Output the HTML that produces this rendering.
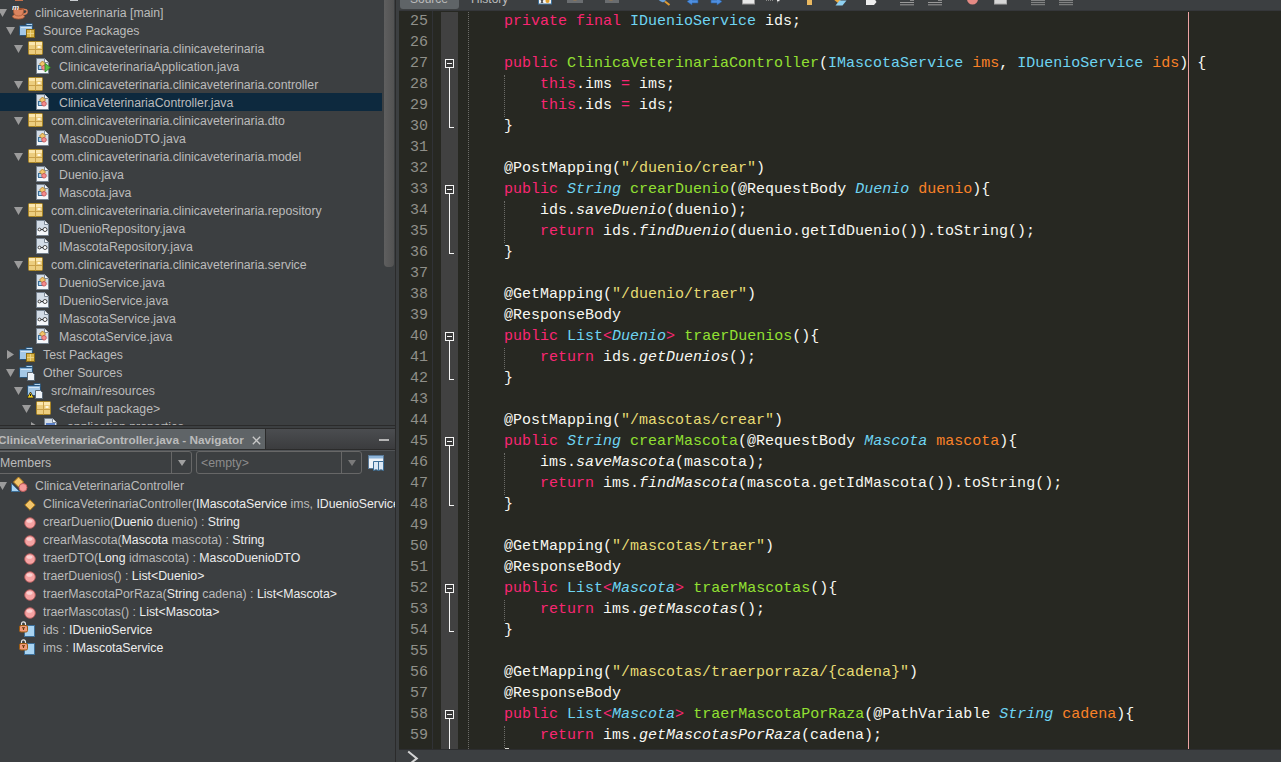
<!DOCTYPE html><html><head><meta charset="utf-8"><style>
*{box-sizing:border-box;margin:0;padding:0}
html,body{width:1281px;height:762px;overflow:hidden;background:#3c3f41}
body{position:relative;font-family:"Liberation Sans",sans-serif;}
.abs{position:absolute}
#proj{position:absolute;left:0;top:0;width:395px;height:425px;background:#3c3f41;overflow:hidden}
.row{position:absolute;left:0;width:382px;height:18px}
.row.sel{background:#0d293e}
.tx{position:absolute;top:1px;height:18px;line-height:18px;font-size:12.3px;color:#bbbbbb;white-space:pre}
.tx .w{color:#ededed}
#nav{position:absolute;left:0;top:427px;width:395px;height:335px;background:#3c3f41;overflow:hidden}
#ed{position:absolute;left:399px;top:11px;width:882px;height:738px;background:#272822;overflow:hidden}
.cl{position:absolute;left:69px;height:21px;line-height:21px;font-family:"Liberation Mono",monospace;font-size:15px;color:#f8f8f2;white-space:pre}
.ln{position:absolute;left:0;width:29px;text-align:right;height:21px;line-height:21px;font-family:"Liberation Mono",monospace;font-size:15px;color:#90908a}
.k{color:#f92672} .t{color:#6ed4f2} .ti{color:#6ed4f2;font-style:italic} .f{color:#92e032} .p{color:#fa8228} .s{color:#e6db74} .d{color:#f8f8f2} .i{font-style:italic}
#fold{position:absolute;left:42px;top:1px;width:17px;height:737px;background:#414141}
.fbox{position:absolute;left:46px;width:9px;height:9px;border:1px solid #f4f4f4;background:#383838}
.fbox i{position:absolute;left:1px;top:3px;width:5px;height:1px;background:#f4f4f4}
.fline{position:absolute;left:50px;width:1px;background:#f4f4f4}
.fend{position:absolute;left:50px;width:5px;height:1px;background:#f4f4f4}
.guide{position:absolute;width:1px;border-left:1px dotted #6c6c68}
#margin{position:absolute;left:789px;top:1px;width:1px;height:737px;background:#eea4a4}
#tb{position:absolute;left:396px;top:0;width:885px;height:11px;background:#3c3f41;overflow:hidden}
</style></head><body>
<div id="proj">
<svg width="8" height="1" viewBox="0 0 8 1" style="position:absolute;left:15px;top:0"><rect x="0" y="0" width="8" height="1" fill="#c8704a"/></svg>
<svg width="8" height="1" viewBox="0 0 8 1" style="position:absolute;left:70px;top:0"><rect x="0" y="0" width="8" height="1" fill="#c8ccd0"/></svg>
<div class="row" style="top:3px"><svg width="9" height="8" viewBox="0 0 9 8" style="position:absolute;left:-2px;top:6px"><path d="M0 0H9L4.5 8Z" fill="#9b9b9b"/></svg><div style="position:absolute;left:12px;top:0"><svg width="17" height="18" viewBox="0 0 17 18" style="position:absolute;left:0;top:0"><ellipse cx="6.5" cy="13.5" rx="6" ry="2.5" fill="#e08a62" stroke="#a85a38" stroke-width="0.8"/><path d="M11.5 6.5Q15.5 6 15 9Q14.5 11.5 11 11" fill="none" stroke="#d9805a" stroke-width="1.6"/><path d="M1.5 5.5H11.5V8Q11.5 13 6.5 13Q1.5 13 1.5 8Z" fill="#dc845e" stroke="#a85a38" stroke-width="0.8"/><ellipse cx="6.5" cy="6" rx="4.5" ry="1" fill="#9a4c2c"/><text x="0" y="7" font-size="8" font-family="Liberation Sans" font-style="italic" font-weight="bold" fill="#f0f4f8">m</text></svg></div><div class="tx" style="left:35px">clinicaveterinaria [main]</div></div>
<div class="row" style="top:21px"><svg width="9" height="8" viewBox="0 0 9 8" style="position:absolute;left:6px;top:6px"><path d="M0 0H9L4.5 8Z" fill="#9b9b9b"/></svg><div style="position:absolute;left:20px;top:0"><svg width="16" height="16" viewBox="0 0 16 16" style="position:absolute;left:-1px;top:2px"><path d="M7 0.5H12.5Q13.5 0.5 13.5 1.5V3H7Z" fill="#b4d4ee" stroke="#2a5478"/><rect x="0.5" y="2.5" width="13" height="10" rx="1" fill="#86b1d8" stroke="#2a5478"/><rect x="1" y="5" width="12" height="7" fill="#a4c8e6"/><path d="M1.5 4.5H12.5" stroke="#d4e6f4"/><rect x="7.5" y="6.5" width="8" height="8" fill="#d9b54a" stroke="#8a6a15"/><path d="M11.5 7V14M8 10.5H15" stroke="#f0d890" stroke-width="0.8"/></svg></div><div class="tx" style="left:43px">Source Packages</div></div>
<div class="row" style="top:39px"><svg width="9" height="8" viewBox="0 0 9 8" style="position:absolute;left:14px;top:6px"><path d="M0 0H9L4.5 8Z" fill="#9b9b9b"/></svg><div style="position:absolute;left:28px;top:0"><svg width="15" height="14" viewBox="0 0 15 14" style="position:absolute;left:0;top:2px"><rect x="0.5" y="0.5" width="14" height="13" rx="1" fill="#eccd7f" stroke="#a98526"/><rect x="1" y="1" width="13" height="3" fill="#fbe7b0"/><path d="M7.5 1V13.5M1 8.5H14" stroke="#c9a04a" stroke-width="1"/><rect x="9.5" y="5" width="3" height="2" fill="#fff8e0"/></svg></div><div class="tx" style="left:51px">com.clinicaveterinaria.clinicaveterinaria</div></div>
<div class="row" style="top:57px"><div style="position:absolute;left:36px;top:0"><svg width="15" height="16" viewBox="0 0 15 16" style="position:absolute;left:0;top:1px"><path d="M0.5 0.5H8.5L12.5 4.5V15.5H0.5Z" fill="#d3dce6" stroke="#75818e"/><path d="M8.5 0.5V4.5H12.5" fill="#f6f8fa" stroke="#7e8a97"/><rect x="1" y="11" width="11" height="4" fill="#f4f7fa"/><rect x="2.5" y="7.5" width="5" height="4" fill="#a8d0ee" stroke="#3d6f98"/><path d="M6.5 3L9.5 6L6.5 9L3.5 6Z" fill="#f1c56c" stroke="#b07a18" stroke-width="0.8"/><circle cx="8" cy="9.8" r="2.3" fill="#f48c8c" stroke="#c05050" stroke-width="0.8"/><path d="M9 5.5L14.5 9.5L9 14Z" fill="#5cc144" stroke="#2f7d20" stroke-width="0.8"/></svg></div><div class="tx" style="left:59px">ClinicaveterinariaApplication.java</div></div>
<div class="row" style="top:75px"><svg width="9" height="8" viewBox="0 0 9 8" style="position:absolute;left:14px;top:6px"><path d="M0 0H9L4.5 8Z" fill="#9b9b9b"/></svg><div style="position:absolute;left:28px;top:0"><svg width="15" height="14" viewBox="0 0 15 14" style="position:absolute;left:0;top:2px"><rect x="0.5" y="0.5" width="14" height="13" rx="1" fill="#eccd7f" stroke="#a98526"/><rect x="1" y="1" width="13" height="3" fill="#fbe7b0"/><path d="M7.5 1V13.5M1 8.5H14" stroke="#c9a04a" stroke-width="1"/><rect x="9.5" y="5" width="3" height="2" fill="#fff8e0"/></svg></div><div class="tx" style="left:51px">com.clinicaveterinaria.clinicaveterinaria.controller</div></div>
<div class="row sel" style="top:93px"><div style="position:absolute;left:36px;top:0"><svg width="15" height="16" viewBox="0 0 15 16" style="position:absolute;left:0;top:1px"><path d="M0.5 0.5H8.5L12.5 4.5V15.5H0.5Z" fill="#d3dce6" stroke="#75818e"/><path d="M8.5 0.5V4.5H12.5" fill="#f6f8fa" stroke="#7e8a97"/><rect x="1" y="11" width="11" height="4" fill="#f4f7fa"/><rect x="2.5" y="7.5" width="5" height="4" fill="#a8d0ee" stroke="#3d6f98"/><path d="M6.5 3L9.5 6L6.5 9L3.5 6Z" fill="#f1c56c" stroke="#b07a18" stroke-width="0.8"/><circle cx="8" cy="9.8" r="2.3" fill="#f48c8c" stroke="#c05050" stroke-width="0.8"/></svg></div><div class="tx" style="left:59px">ClinicaVeterinariaController.java</div></div>
<div class="row" style="top:111px"><svg width="9" height="8" viewBox="0 0 9 8" style="position:absolute;left:14px;top:6px"><path d="M0 0H9L4.5 8Z" fill="#9b9b9b"/></svg><div style="position:absolute;left:28px;top:0"><svg width="15" height="14" viewBox="0 0 15 14" style="position:absolute;left:0;top:2px"><rect x="0.5" y="0.5" width="14" height="13" rx="1" fill="#eccd7f" stroke="#a98526"/><rect x="1" y="1" width="13" height="3" fill="#fbe7b0"/><path d="M7.5 1V13.5M1 8.5H14" stroke="#c9a04a" stroke-width="1"/><rect x="9.5" y="5" width="3" height="2" fill="#fff8e0"/></svg></div><div class="tx" style="left:51px">com.clinicaveterinaria.clinicaveterinaria.dto</div></div>
<div class="row" style="top:129px"><div style="position:absolute;left:36px;top:0"><svg width="15" height="16" viewBox="0 0 15 16" style="position:absolute;left:0;top:1px"><path d="M0.5 0.5H8.5L12.5 4.5V15.5H0.5Z" fill="#d3dce6" stroke="#75818e"/><path d="M8.5 0.5V4.5H12.5" fill="#f6f8fa" stroke="#7e8a97"/><rect x="1" y="11" width="11" height="4" fill="#f4f7fa"/><rect x="2.5" y="7.5" width="5" height="4" fill="#a8d0ee" stroke="#3d6f98"/><path d="M6.5 3L9.5 6L6.5 9L3.5 6Z" fill="#f1c56c" stroke="#b07a18" stroke-width="0.8"/><circle cx="8" cy="9.8" r="2.3" fill="#f48c8c" stroke="#c05050" stroke-width="0.8"/></svg></div><div class="tx" style="left:59px">MascoDuenioDTO.java</div></div>
<div class="row" style="top:147px"><svg width="9" height="8" viewBox="0 0 9 8" style="position:absolute;left:14px;top:6px"><path d="M0 0H9L4.5 8Z" fill="#9b9b9b"/></svg><div style="position:absolute;left:28px;top:0"><svg width="15" height="14" viewBox="0 0 15 14" style="position:absolute;left:0;top:2px"><rect x="0.5" y="0.5" width="14" height="13" rx="1" fill="#eccd7f" stroke="#a98526"/><rect x="1" y="1" width="13" height="3" fill="#fbe7b0"/><path d="M7.5 1V13.5M1 8.5H14" stroke="#c9a04a" stroke-width="1"/><rect x="9.5" y="5" width="3" height="2" fill="#fff8e0"/></svg></div><div class="tx" style="left:51px">com.clinicaveterinaria.clinicaveterinaria.model</div></div>
<div class="row" style="top:165px"><div style="position:absolute;left:36px;top:0"><svg width="15" height="16" viewBox="0 0 15 16" style="position:absolute;left:0;top:1px"><path d="M0.5 0.5H8.5L12.5 4.5V15.5H0.5Z" fill="#d3dce6" stroke="#75818e"/><path d="M8.5 0.5V4.5H12.5" fill="#f6f8fa" stroke="#7e8a97"/><rect x="1" y="11" width="11" height="4" fill="#f4f7fa"/><rect x="2.5" y="7.5" width="5" height="4" fill="#a8d0ee" stroke="#3d6f98"/><path d="M6.5 3L9.5 6L6.5 9L3.5 6Z" fill="#f1c56c" stroke="#b07a18" stroke-width="0.8"/><circle cx="8" cy="9.8" r="2.3" fill="#f48c8c" stroke="#c05050" stroke-width="0.8"/></svg></div><div class="tx" style="left:59px">Duenio.java</div></div>
<div class="row" style="top:183px"><div style="position:absolute;left:36px;top:0"><svg width="15" height="16" viewBox="0 0 15 16" style="position:absolute;left:0;top:1px"><path d="M0.5 0.5H8.5L12.5 4.5V15.5H0.5Z" fill="#d3dce6" stroke="#75818e"/><path d="M8.5 0.5V4.5H12.5" fill="#f6f8fa" stroke="#7e8a97"/><rect x="1" y="11" width="11" height="4" fill="#f4f7fa"/><rect x="2.5" y="7.5" width="5" height="4" fill="#a8d0ee" stroke="#3d6f98"/><path d="M6.5 3L9.5 6L6.5 9L3.5 6Z" fill="#f1c56c" stroke="#b07a18" stroke-width="0.8"/><circle cx="8" cy="9.8" r="2.3" fill="#f48c8c" stroke="#c05050" stroke-width="0.8"/></svg></div><div class="tx" style="left:59px">Mascota.java</div></div>
<div class="row" style="top:201px"><svg width="9" height="8" viewBox="0 0 9 8" style="position:absolute;left:14px;top:6px"><path d="M0 0H9L4.5 8Z" fill="#9b9b9b"/></svg><div style="position:absolute;left:28px;top:0"><svg width="15" height="14" viewBox="0 0 15 14" style="position:absolute;left:0;top:2px"><rect x="0.5" y="0.5" width="14" height="13" rx="1" fill="#eccd7f" stroke="#a98526"/><rect x="1" y="1" width="13" height="3" fill="#fbe7b0"/><path d="M7.5 1V13.5M1 8.5H14" stroke="#c9a04a" stroke-width="1"/><rect x="9.5" y="5" width="3" height="2" fill="#fff8e0"/></svg></div><div class="tx" style="left:51px">com.clinicaveterinaria.clinicaveterinaria.repository</div></div>
<div class="row" style="top:219px"><div style="position:absolute;left:36px;top:0"><svg width="15" height="16" viewBox="0 0 15 16" style="position:absolute;left:0;top:1px"><path d="M0.5 0.5H8.5L12.5 4.5V15.5H0.5Z" fill="#d3dce6" stroke="#75818e"/><path d="M8.5 0.5V4.5H12.5" fill="#f6f8fa" stroke="#7e8a97"/><rect x="1" y="11" width="11" height="4" fill="#f4f7fa"/><circle cx="3.5" cy="9.5" r="1.4" fill="#fff" stroke="#333" stroke-width="0.9"/><circle cx="9" cy="9.5" r="2" fill="#fff" stroke="#333" stroke-width="0.9"/><path d="M4.9 9.5H7" stroke="#333" stroke-width="1"/></svg></div><div class="tx" style="left:59px">IDuenioRepository.java</div></div>
<div class="row" style="top:237px"><div style="position:absolute;left:36px;top:0"><svg width="15" height="16" viewBox="0 0 15 16" style="position:absolute;left:0;top:1px"><path d="M0.5 0.5H8.5L12.5 4.5V15.5H0.5Z" fill="#d3dce6" stroke="#75818e"/><path d="M8.5 0.5V4.5H12.5" fill="#f6f8fa" stroke="#7e8a97"/><rect x="1" y="11" width="11" height="4" fill="#f4f7fa"/><circle cx="3.5" cy="9.5" r="1.4" fill="#fff" stroke="#333" stroke-width="0.9"/><circle cx="9" cy="9.5" r="2" fill="#fff" stroke="#333" stroke-width="0.9"/><path d="M4.9 9.5H7" stroke="#333" stroke-width="1"/></svg></div><div class="tx" style="left:59px">IMascotaRepository.java</div></div>
<div class="row" style="top:255px"><svg width="9" height="8" viewBox="0 0 9 8" style="position:absolute;left:14px;top:6px"><path d="M0 0H9L4.5 8Z" fill="#9b9b9b"/></svg><div style="position:absolute;left:28px;top:0"><svg width="15" height="14" viewBox="0 0 15 14" style="position:absolute;left:0;top:2px"><rect x="0.5" y="0.5" width="14" height="13" rx="1" fill="#eccd7f" stroke="#a98526"/><rect x="1" y="1" width="13" height="3" fill="#fbe7b0"/><path d="M7.5 1V13.5M1 8.5H14" stroke="#c9a04a" stroke-width="1"/><rect x="9.5" y="5" width="3" height="2" fill="#fff8e0"/></svg></div><div class="tx" style="left:51px">com.clinicaveterinaria.clinicaveterinaria.service</div></div>
<div class="row" style="top:273px"><div style="position:absolute;left:36px;top:0"><svg width="15" height="16" viewBox="0 0 15 16" style="position:absolute;left:0;top:1px"><path d="M0.5 0.5H8.5L12.5 4.5V15.5H0.5Z" fill="#d3dce6" stroke="#75818e"/><path d="M8.5 0.5V4.5H12.5" fill="#f6f8fa" stroke="#7e8a97"/><rect x="1" y="11" width="11" height="4" fill="#f4f7fa"/><rect x="2.5" y="7.5" width="5" height="4" fill="#a8d0ee" stroke="#3d6f98"/><path d="M6.5 3L9.5 6L6.5 9L3.5 6Z" fill="#f1c56c" stroke="#b07a18" stroke-width="0.8"/><circle cx="8" cy="9.8" r="2.3" fill="#f48c8c" stroke="#c05050" stroke-width="0.8"/></svg></div><div class="tx" style="left:59px">DuenioService.java</div></div>
<div class="row" style="top:291px"><div style="position:absolute;left:36px;top:0"><svg width="15" height="16" viewBox="0 0 15 16" style="position:absolute;left:0;top:1px"><path d="M0.5 0.5H8.5L12.5 4.5V15.5H0.5Z" fill="#d3dce6" stroke="#75818e"/><path d="M8.5 0.5V4.5H12.5" fill="#f6f8fa" stroke="#7e8a97"/><rect x="1" y="11" width="11" height="4" fill="#f4f7fa"/><circle cx="3.5" cy="9.5" r="1.4" fill="#fff" stroke="#333" stroke-width="0.9"/><circle cx="9" cy="9.5" r="2" fill="#fff" stroke="#333" stroke-width="0.9"/><path d="M4.9 9.5H7" stroke="#333" stroke-width="1"/></svg></div><div class="tx" style="left:59px">IDuenioService.java</div></div>
<div class="row" style="top:309px"><div style="position:absolute;left:36px;top:0"><svg width="15" height="16" viewBox="0 0 15 16" style="position:absolute;left:0;top:1px"><path d="M0.5 0.5H8.5L12.5 4.5V15.5H0.5Z" fill="#d3dce6" stroke="#75818e"/><path d="M8.5 0.5V4.5H12.5" fill="#f6f8fa" stroke="#7e8a97"/><rect x="1" y="11" width="11" height="4" fill="#f4f7fa"/><circle cx="3.5" cy="9.5" r="1.4" fill="#fff" stroke="#333" stroke-width="0.9"/><circle cx="9" cy="9.5" r="2" fill="#fff" stroke="#333" stroke-width="0.9"/><path d="M4.9 9.5H7" stroke="#333" stroke-width="1"/></svg></div><div class="tx" style="left:59px">IMascotaService.java</div></div>
<div class="row" style="top:327px"><div style="position:absolute;left:36px;top:0"><svg width="15" height="16" viewBox="0 0 15 16" style="position:absolute;left:0;top:1px"><path d="M0.5 0.5H8.5L12.5 4.5V15.5H0.5Z" fill="#d3dce6" stroke="#75818e"/><path d="M8.5 0.5V4.5H12.5" fill="#f6f8fa" stroke="#7e8a97"/><rect x="1" y="11" width="11" height="4" fill="#f4f7fa"/><rect x="2.5" y="7.5" width="5" height="4" fill="#a8d0ee" stroke="#3d6f98"/><path d="M6.5 3L9.5 6L6.5 9L3.5 6Z" fill="#f1c56c" stroke="#b07a18" stroke-width="0.8"/><circle cx="8" cy="9.8" r="2.3" fill="#f48c8c" stroke="#c05050" stroke-width="0.8"/></svg></div><div class="tx" style="left:59px">MascotaService.java</div></div>
<div class="row" style="top:345px"><svg width="8" height="9" viewBox="0 0 8 9" style="position:absolute;left:7px;top:5px"><path d="M0 0V9L7 4.5Z" fill="#9b9b9b"/></svg><div style="position:absolute;left:20px;top:0"><svg width="16" height="16" viewBox="0 0 16 16" style="position:absolute;left:-1px;top:2px"><path d="M7 0.5H12.5Q13.5 0.5 13.5 1.5V3H7Z" fill="#b4d4ee" stroke="#2a5478"/><rect x="0.5" y="2.5" width="13" height="10" rx="1" fill="#86b1d8" stroke="#2a5478"/><rect x="1" y="5" width="12" height="7" fill="#a4c8e6"/><path d="M1.5 4.5H12.5" stroke="#d4e6f4"/><rect x="7.5" y="6.5" width="8" height="8" fill="#d9b54a" stroke="#8a6a15"/><path d="M11.5 7V14M8 10.5H15" stroke="#f0d890" stroke-width="0.8"/></svg></div><div class="tx" style="left:43px">Test Packages</div></div>
<div class="row" style="top:363px"><svg width="9" height="8" viewBox="0 0 9 8" style="position:absolute;left:6px;top:6px"><path d="M0 0H9L4.5 8Z" fill="#9b9b9b"/></svg><div style="position:absolute;left:20px;top:0"><svg width="16" height="16" viewBox="0 0 16 16" style="position:absolute;left:-1px;top:2px"><path d="M7 0.5H12.5Q13.5 0.5 13.5 1.5V3H7Z" fill="#b4d4ee" stroke="#2a5478"/><rect x="0.5" y="2.5" width="13" height="10" rx="1" fill="#86b1d8" stroke="#2a5478"/><rect x="1" y="5" width="12" height="7" fill="#a4c8e6"/><path d="M1.5 4.5H12.5" stroke="#d4e6f4"/><path d="M8.5 7.5H13.5L15.5 9.5V15.5H8.5Z" fill="#eef2f6" stroke="#5a6876"/></svg></div><div class="tx" style="left:43px">Other Sources</div></div>
<div class="row" style="top:381px"><svg width="9" height="8" viewBox="0 0 9 8" style="position:absolute;left:14px;top:6px"><path d="M0 0H9L4.5 8Z" fill="#9b9b9b"/></svg><div style="position:absolute;left:28px;top:0"><svg width="16" height="16" viewBox="0 0 16 16" style="position:absolute;left:-1px;top:2px"><path d="M7 0.5H12.5Q13.5 0.5 13.5 1.5V3H7Z" fill="#b4d4ee" stroke="#2a5478"/><rect x="0.5" y="2.5" width="13" height="10" rx="1" fill="#86b1d8" stroke="#2a5478"/><rect x="1" y="5" width="12" height="7" fill="#a4c8e6"/><path d="M1.5 4.5H12.5" stroke="#d4e6f4"/><path d="M8.5 7.5H13.5L15.5 9.5V15.5H8.5Z" fill="#eef2f6" stroke="#5a6876"/><path d="M3.5 9L7 15H0Z" fill="#f5d020" stroke="#222" stroke-width="0.8"/><path d="M3.5 11V13" stroke="#222"/></svg></div><div class="tx" style="left:51px">src/main/resources</div></div>
<div class="row" style="top:399px"><svg width="9" height="8" viewBox="0 0 9 8" style="position:absolute;left:22px;top:6px"><path d="M0 0H9L4.5 8Z" fill="#9b9b9b"/></svg><div style="position:absolute;left:36px;top:0"><svg width="15" height="14" viewBox="0 0 15 14" style="position:absolute;left:0;top:2px"><rect x="0.5" y="0.5" width="14" height="13" rx="1" fill="#eccd7f" stroke="#a98526"/><rect x="1" y="1" width="13" height="3" fill="#fbe7b0"/><path d="M7.5 1V13.5M1 8.5H14" stroke="#c9a04a" stroke-width="1"/><rect x="9.5" y="5" width="3" height="2" fill="#fff8e0"/></svg></div><div class="tx" style="left:59px">&lt;default package&gt;</div></div>
<div class="row" style="top:417px"><svg width="8" height="9" viewBox="0 0 8 9" style="position:absolute;left:31px;top:5px"><path d="M0 0V9L7 4.5Z" fill="#9b9b9b"/></svg><div style="position:absolute;left:44px;top:0"><svg width="15" height="16" viewBox="0 0 15 16" style="position:absolute;left:0;top:1px"><path d="M0.5 0.5H8.5L12.5 4.5V15.5H0.5Z" fill="#d3dce6" stroke="#75818e"/><path d="M8.5 0.5V4.5H12.5" fill="#f6f8fa" stroke="#7e8a97"/><rect x="1" y="11" width="11" height="4" fill="#f4f7fa"/><rect x="2" y="5" width="9" height="8" fill="#5a80c8"/></svg></div><div class="tx" style="left:67px">application.properties</div></div>
</div>
<div class="abs" style="left:384px;top:0;width:10px;height:267px;background:linear-gradient(to right,#5f5f5f,#525252);border-radius:0 0 4px 4px"></div>
<div class="abs" style="left:395px;top:0;width:1px;height:762px;background:#2b2b2b"></div>
<div class="abs" style="left:0;top:425px;width:395px;height:1px;background:#2b2b2b"></div>
<div id="nav">
 <div class="abs" style="left:0;top:1px;width:395px;height:1px;background:#2b2b2b"></div>
 <div class="abs" style="left:0;top:2px;width:265px;height:20px;background:#5f6467"></div>
 <div class="abs" style="left:265px;top:2px;width:1px;height:20px;background:#2b2b2b"></div>
 <div class="abs" style="left:266px;top:2px;width:129px;height:20px;background:linear-gradient(#4b4d50,#3b3c3e)"></div>
 <div class="abs" style="left:-2px;top:3px;height:20px;line-height:20px;font-size:11.8px;font-weight:bold;color:#bbbbbb;white-space:pre">ClinicaVeterinariaController.java - Navigator</div>
 <svg width="9" height="9" viewBox="0 0 9 9" style="position:absolute;left:252px;top:9px"><path d="M0.8 0.8L8.2 8.2M8.2 0.8L0.8 8.2" stroke="#c8c8c8" stroke-width="1.3"/></svg>
 <div class="abs" style="left:379px;top:12px;width:10px;height:2px;background:#b4b4b4"></div>
 <div class="abs" style="left:0;top:22px;width:395px;height:1px;background:#2b2b2b"></div>
 <div class="abs" style="left:0;top:23px;width:395px;height:1px;background:#505356"></div>
 <div class="abs" style="left:-4px;top:24px;width:196px;height:23px;border:1px solid #676767;border-radius:3px"></div>
 <div class="abs" style="left:171px;top:25px;width:1px;height:21px;background:#676767"></div>
 <div class="abs" style="left:0px;top:25px;height:23px;line-height:23px;font-size:12.3px;color:#bbbbbb">Members</div>
 <svg width="8" height="6" viewBox="0 0 8 6" style="position:absolute;left:178px;top:33px"><path d="M0 0H8L4 6Z" fill="#a0a0a0"/></svg>
 <div class="abs" style="left:196px;top:24px;width:166px;height:23px;border:1px solid #676767;border-radius:3px"></div>
 <div class="abs" style="left:341px;top:25px;width:1px;height:21px;background:#676767"></div>
 <div class="abs" style="left:201px;top:25px;height:23px;line-height:23px;font-size:12.3px;color:#8c8c8c">&lt;empty&gt;</div>
 <svg width="8" height="6" viewBox="0 0 8 6" style="position:absolute;left:348px;top:33px"><path d="M0 0H8L4 6Z" fill="#7a7a7a"/></svg>
 <svg width="17" height="17" viewBox="0 0 17 17" style="position:absolute;left:368px;top:28px"><rect x="0.5" y="0.5" width="15" height="13" fill="#eef3f8" stroke="#5a7a98"/><rect x="1" y="1" width="14" height="2.5" fill="#8db4d8"/><path d="M5.5 6.5H15.5V15.5Q13 14 10.5 15.5Q8 14 5.5 15.5Z" fill="#dce8f4" stroke="#3d6f98"/><path d="M10.5 7V15.5" stroke="#3d6f98"/></svg>
<div class="row" style="top:49px"><svg width="9" height="8" viewBox="0 0 9 8" style="position:absolute;left:-2px;top:6px"><path d="M0 0H9L4.5 8Z" fill="#9b9b9b"/></svg><div style="position:absolute;left:12px;top:0"><svg width="17" height="17" viewBox="0 0 17 17" style="position:absolute;left:-1px;top:0"><path d="M0.5 15.5V7.5L8.5 15.5Z" fill="#a9d4f2" stroke="#3d6f98"/><path d="M7.5 1L12.5 6L7.5 11L2.5 6Z" fill="#f1c56c" stroke="#b07a18"/><circle cx="12" cy="11.5" r="4" fill="#f59a9a" stroke="#c25a5a" stroke-width="0.9"/></svg></div><div class="tx" style="left:35px"><span class="n">ClinicaVeterinariaController</span></div></div>
<div class="row" style="top:67px"><div style="position:absolute;left:24px;top:0"><svg width="12" height="12" viewBox="0 0 12 12" style="position:absolute;left:0;top:5px"><path d="M6 0.8L11.2 6L6 11.2L0.8 6Z" fill="#f1c56c" stroke="#b07a18"/></svg></div><div class="tx" style="left:43px"><span class="n">ClinicaVeterinariaController(</span><span class="w">IMascotaService</span><span class="n"> ims, </span><span class="w">IDuenioService</span><span class="n"> ids)</span></div></div>
<div class="row" style="top:85px"><div style="position:absolute;left:24px;top:0"><svg width="12" height="12" viewBox="0 0 12 12" style="position:absolute;left:0;top:5px"><circle cx="6" cy="6" r="5.3" fill="#f5a3a3" stroke="#b85c5c" stroke-width="0.9"/><ellipse cx="5.5" cy="4" rx="3" ry="1.8" fill="#fbd0d0"/></svg></div><div class="tx" style="left:43px"><span class="n">crearDuenio(</span><span class="w">Duenio</span><span class="n"> duenio) : </span><span class="w">String</span></div></div>
<div class="row" style="top:103px"><div style="position:absolute;left:24px;top:0"><svg width="12" height="12" viewBox="0 0 12 12" style="position:absolute;left:0;top:5px"><circle cx="6" cy="6" r="5.3" fill="#f5a3a3" stroke="#b85c5c" stroke-width="0.9"/><ellipse cx="5.5" cy="4" rx="3" ry="1.8" fill="#fbd0d0"/></svg></div><div class="tx" style="left:43px"><span class="n">crearMascota(</span><span class="w">Mascota</span><span class="n"> mascota) : </span><span class="w">String</span></div></div>
<div class="row" style="top:121px"><div style="position:absolute;left:24px;top:0"><svg width="12" height="12" viewBox="0 0 12 12" style="position:absolute;left:0;top:5px"><circle cx="6" cy="6" r="5.3" fill="#f5a3a3" stroke="#b85c5c" stroke-width="0.9"/><ellipse cx="5.5" cy="4" rx="3" ry="1.8" fill="#fbd0d0"/></svg></div><div class="tx" style="left:43px"><span class="n">traerDTO(</span><span class="w">Long</span><span class="n"> idmascota) : </span><span class="w">MascoDuenioDTO</span></div></div>
<div class="row" style="top:139px"><div style="position:absolute;left:24px;top:0"><svg width="12" height="12" viewBox="0 0 12 12" style="position:absolute;left:0;top:5px"><circle cx="6" cy="6" r="5.3" fill="#f5a3a3" stroke="#b85c5c" stroke-width="0.9"/><ellipse cx="5.5" cy="4" rx="3" ry="1.8" fill="#fbd0d0"/></svg></div><div class="tx" style="left:43px"><span class="n">traerDuenios() : </span><span class="w">List&lt;Duenio&gt;</span></div></div>
<div class="row" style="top:157px"><div style="position:absolute;left:24px;top:0"><svg width="12" height="12" viewBox="0 0 12 12" style="position:absolute;left:0;top:5px"><circle cx="6" cy="6" r="5.3" fill="#f5a3a3" stroke="#b85c5c" stroke-width="0.9"/><ellipse cx="5.5" cy="4" rx="3" ry="1.8" fill="#fbd0d0"/></svg></div><div class="tx" style="left:43px"><span class="n">traerMascotaPorRaza(</span><span class="w">String</span><span class="n"> cadena) : </span><span class="w">List&lt;Mascota&gt;</span></div></div>
<div class="row" style="top:175px"><div style="position:absolute;left:24px;top:0"><svg width="12" height="12" viewBox="0 0 12 12" style="position:absolute;left:0;top:5px"><circle cx="6" cy="6" r="5.3" fill="#f5a3a3" stroke="#b85c5c" stroke-width="0.9"/><ellipse cx="5.5" cy="4" rx="3" ry="1.8" fill="#fbd0d0"/></svg></div><div class="tx" style="left:43px"><span class="n">traerMascotas() : </span><span class="w">List&lt;Mascota&gt;</span></div></div>
<div class="row" style="top:193px"><div style="position:absolute;left:24px;top:0"><svg width="16" height="16" viewBox="0 0 16 16" style="position:absolute;left:-5px;top:1px"><rect x="5.5" y="4.5" width="10" height="11" fill="#a9d4f2" stroke="#3d6f98"/><path d="M2.5 4.5V3Q2.5 0.8 4.5 0.8Q6.5 0.8 6.5 3V4.5" fill="none" stroke="#e8e8e8" stroke-width="1.2"/><rect x="0.5" y="4.5" width="8" height="6.5" rx="1.5" fill="#f19a7a" stroke="#9a5a10"/><path d="M3 6.8H6M4.5 6.8V9" stroke="#6a3a08" stroke-width="1.1"/></svg></div><div class="tx" style="left:43px"><span class="n">ids : </span><span class="w">IDuenioService</span></div></div>
<div class="row" style="top:211px"><div style="position:absolute;left:24px;top:0"><svg width="16" height="16" viewBox="0 0 16 16" style="position:absolute;left:-5px;top:1px"><rect x="5.5" y="4.5" width="10" height="11" fill="#a9d4f2" stroke="#3d6f98"/><path d="M2.5 4.5V3Q2.5 0.8 4.5 0.8Q6.5 0.8 6.5 3V4.5" fill="none" stroke="#e8e8e8" stroke-width="1.2"/><rect x="0.5" y="4.5" width="8" height="6.5" rx="1.5" fill="#f19a7a" stroke="#9a5a10"/><path d="M3 6.8H6M4.5 6.8V9" stroke="#6a3a08" stroke-width="1.1"/></svg></div><div class="tx" style="left:43px"><span class="n">ims : </span><span class="w">IMascotaService</span></div></div>
</div>
<div id="tb">
 <div class="abs" style="left:4px;top:-10px;width:59px;height:19px;background:#5f6467;border-radius:3px"></div>
 <div class="abs" style="left:14px;top:-10px;line-height:18px;font-size:12px;color:#bbbbbb">Source</div>
 <div class="abs" style="left:75px;top:-10px;line-height:18px;font-size:12px;color:#bbbbbb">History</div>
 <svg width="14" height="5" viewBox="0 0 14 5" style="position:absolute;left:142px;top:0"><rect x="0.5" y="-3" width="13" height="7" fill="#f4f4f4" stroke="#3d6f98"/><path d="M3 0L5 3M5 0L3 3" stroke="#333"/><circle cx="9.5" cy="1" r="2" fill="#e0a030"/></svg><svg width="16" height="4" viewBox="0 0 16 4" style="position:absolute;left:171px;top:0"><rect x="0" y="-2" width="16" height="5" fill="#6a6d70"/><path d="M4 -2Q8 4 12 -2" fill="#8b7558"/></svg><svg width="14" height="4" viewBox="0 0 14 4" style="position:absolute;left:209px;top:0"><rect x="0" y="-2" width="14" height="5" fill="#6a6d70"/><path d="M2 -2Q6 4 10 -2" fill="#8b7558"/></svg><svg width="13" height="6" viewBox="0 0 13 6" style="position:absolute;left:262px;top:0"><path d="M0 -2Q5 3 7 0" stroke="#6aa0d8" stroke-width="2" fill="none"/><path d="M7 1.5L11.5 5" stroke="#e09a30" stroke-width="2"/></svg><svg width="13" height="6" viewBox="0 0 13 6" style="position:absolute;left:290px;top:0"><path d="M6 -2L1 1.5L6 5V3H12V0H6Z" fill="#4f8fe0" stroke="#2a5fa0" stroke-width="0.6"/></svg><svg width="13" height="6" viewBox="0 0 13 6" style="position:absolute;left:314px;top:0"><path d="M7 -2L12 1.5L7 5V3H1V0H7Z" fill="#4f8fe0" stroke="#2a5fa0" stroke-width="0.6"/></svg><svg width="13" height="5" viewBox="0 0 13 5" style="position:absolute;left:346px;top:0"><rect x="0.5" y="-3" width="12" height="7" fill="#e8e8e8" stroke="#999"/></svg><svg width="16" height="5" viewBox="0 0 16 5" style="position:absolute;left:370px;top:0"><path d="M0 0.5H8" stroke="#888" stroke-dasharray="1 1"/><path d="M10 -3L14 1L11 1.5L12 4Z" fill="#eee"/></svg><svg width="6" height="5" viewBox="0 0 6 5" style="position:absolute;left:411px;top:0"><rect x="0" y="-2" width="5" height="7" fill="#e9b860"/></svg><svg width="14" height="6" viewBox="0 0 14 6" style="position:absolute;left:437px;top:0"><path d="M0 -1L5 3L8 0Z" fill="#e9a940"/><path d="M2.5 5.5L6.5 0.5H13.5L9.5 5.5Z" fill="#8fd0f0"/></svg><svg width="11" height="5" viewBox="0 0 11 5" style="position:absolute;left:470px;top:0"><path d="M0 -2H8L10.5 2L8 5H0Z" fill="#ededed"/></svg><svg width="15" height="6" viewBox="0 0 15 6" style="position:absolute;left:504px;top:0"><path d="M0 2.5H14M0 4.8H14" stroke="#999"/><rect x="10" y="-1" width="4" height="2" fill="#888"/></svg><svg width="15" height="6" viewBox="0 0 15 6" style="position:absolute;left:532px;top:0"><path d="M0 2.5H14M0 4.8H14" stroke="#999"/><rect x="10" y="-1" width="4" height="2" fill="#888"/></svg><svg width="13" height="5" viewBox="0 0 13 5" style="position:absolute;left:570px;top:0"><circle cx="6.5" cy="-1" r="5.5" fill="#e58a84"/></svg><svg width="13" height="5" viewBox="0 0 13 5" style="position:absolute;left:598px;top:0"><rect x="0.5" y="-3" width="12" height="7" fill="#d6d6d6" stroke="#aaa"/></svg><svg width="15" height="6" viewBox="0 0 15 6" style="position:absolute;left:635px;top:0"><path d="M0 0.6H14M0 2.6H14M0 4.7H14" stroke="#8a8a8a"/></svg><svg width="15" height="6" viewBox="0 0 15 6" style="position:absolute;left:663px;top:0"><path d="M0 0.6H14M0 2.6H14M0 4.7H14" stroke="#8a8a8a"/></svg>
</div>
<div class="abs" style="left:399px;top:10px;width:882px;height:1px;background:#35373a"></div>
<div id="ed">
 <div class="abs" style="left:33px;top:0;width:1px;height:738px;background:#303236"></div>
 <div id="fold"></div>
 <div class="fbox" style="top:48px"><i></i></div>
<div class="fline" style="top:57px;height:59px"></div>
<div class="fend" style="top:116px"></div>
<div class="fbox" style="top:174px"><i></i></div>
<div class="fline" style="top:183px;height:59px"></div>
<div class="fend" style="top:242px"></div>
<div class="fbox" style="top:321px"><i></i></div>
<div class="fline" style="top:330px;height:38px"></div>
<div class="fend" style="top:368px"></div>
<div class="fbox" style="top:426px"><i></i></div>
<div class="fline" style="top:435px;height:59px"></div>
<div class="fend" style="top:494px"></div>
<div class="fbox" style="top:573px"><i></i></div>
<div class="fline" style="top:582px;height:38px"></div>
<div class="fend" style="top:620px"></div>
<div class="fbox" style="top:699px"><i></i></div>
<div class="fline" style="top:708px;height:38px"></div>
<div class="fend" style="top:746px"></div>
 <div class="guide" style="left:69px;top:1px;height:737px"></div>
 <div class="guide" style="left:105px;top:64px;height:42px"></div>
<div class="guide" style="left:105px;top:190px;height:42px"></div>
<div class="guide" style="left:105px;top:337px;height:21px"></div>
<div class="guide" style="left:105px;top:442px;height:42px"></div>
<div class="guide" style="left:105px;top:589px;height:21px"></div>
<div class="guide" style="left:105px;top:715px;height:22px"></div>
 <div id="margin"></div>
 <div class="cl" style="top:0px"><span class="d">    </span><span class="k">private</span><span class="d"> </span><span class="k">final</span><span class="d"> </span><span class="t">IDuenioService</span><span class="d"> ids;</span></div>
<div class="ln" style="top:0px">25</div>
<div class="cl" style="top:21px"></div>
<div class="ln" style="top:21px">26</div>
<div class="cl" style="top:42px"><span class="d">    </span><span class="k">public</span><span class="d"> </span><span class="f">ClinicaVeterinariaController</span><span class="d">(</span><span class="t">IMascotaService</span><span class="d"> </span><span class="p">ims</span><span class="d">, </span><span class="t">IDuenioService</span><span class="d"> </span><span class="p">ids</span><span class="d">) {</span></div>
<div class="ln" style="top:42px">27</div>
<div class="cl" style="top:63px"><span class="d">        </span><span class="k">this</span><span class="d">.ims </span><span class="k">=</span><span class="d"> ims;</span></div>
<div class="ln" style="top:63px">28</div>
<div class="cl" style="top:84px"><span class="d">        </span><span class="k">this</span><span class="d">.ids </span><span class="k">=</span><span class="d"> ids;</span></div>
<div class="ln" style="top:84px">29</div>
<div class="cl" style="top:105px"><span class="d">    }</span></div>
<div class="ln" style="top:105px">30</div>
<div class="cl" style="top:126px"></div>
<div class="ln" style="top:126px">31</div>
<div class="cl" style="top:147px"><span class="d">    @PostMapping(</span><span class="s">&quot;/duenio/crear&quot;</span><span class="d">)</span></div>
<div class="ln" style="top:147px">32</div>
<div class="cl" style="top:168px"><span class="d">    </span><span class="k">public</span><span class="d"> </span><span class="ti">String</span><span class="d"> </span><span class="f">crearDuenio</span><span class="d">(@RequestBody </span><span class="ti">Duenio</span><span class="d"> </span><span class="p">duenio</span><span class="d">){</span></div>
<div class="ln" style="top:168px">33</div>
<div class="cl" style="top:189px"><span class="d">        ids.</span><span class="i">saveDuenio</span><span class="d">(duenio);</span></div>
<div class="ln" style="top:189px">34</div>
<div class="cl" style="top:210px"><span class="d">        </span><span class="k">return</span><span class="d"> ids.</span><span class="i">findDuenio</span><span class="d">(duenio.getIdDuenio()).toString();</span></div>
<div class="ln" style="top:210px">35</div>
<div class="cl" style="top:231px"><span class="d">    }</span></div>
<div class="ln" style="top:231px">36</div>
<div class="cl" style="top:252px"></div>
<div class="ln" style="top:252px">37</div>
<div class="cl" style="top:273px"><span class="d">    @GetMapping(</span><span class="s">&quot;/duenio/traer&quot;</span><span class="d">)</span></div>
<div class="ln" style="top:273px">38</div>
<div class="cl" style="top:294px"><span class="d">    @ResponseBody</span></div>
<div class="ln" style="top:294px">39</div>
<div class="cl" style="top:315px"><span class="d">    </span><span class="k">public</span><span class="d"> </span><span class="t">List</span><span class="k">&lt;</span><span class="ti">Duenio</span><span class="k">&gt;</span><span class="d"> </span><span class="f">traerDuenios</span><span class="d">(){</span></div>
<div class="ln" style="top:315px">40</div>
<div class="cl" style="top:336px"><span class="d">        </span><span class="k">return</span><span class="d"> ids.</span><span class="i">getDuenios</span><span class="d">();</span></div>
<div class="ln" style="top:336px">41</div>
<div class="cl" style="top:357px"><span class="d">    }</span></div>
<div class="ln" style="top:357px">42</div>
<div class="cl" style="top:378px"></div>
<div class="ln" style="top:378px">43</div>
<div class="cl" style="top:399px"><span class="d">    @PostMapping(</span><span class="s">&quot;/mascotas/crear&quot;</span><span class="d">)</span></div>
<div class="ln" style="top:399px">44</div>
<div class="cl" style="top:420px"><span class="d">    </span><span class="k">public</span><span class="d"> </span><span class="ti">String</span><span class="d"> </span><span class="f">crearMascota</span><span class="d">(@RequestBody </span><span class="ti">Mascota</span><span class="d"> </span><span class="p">mascota</span><span class="d">){</span></div>
<div class="ln" style="top:420px">45</div>
<div class="cl" style="top:441px"><span class="d">        ims.</span><span class="i">saveMascota</span><span class="d">(mascota);</span></div>
<div class="ln" style="top:441px">46</div>
<div class="cl" style="top:462px"><span class="d">        </span><span class="k">return</span><span class="d"> ims.</span><span class="i">findMascota</span><span class="d">(mascota.getIdMascota()).toString();</span></div>
<div class="ln" style="top:462px">47</div>
<div class="cl" style="top:483px"><span class="d">    }</span></div>
<div class="ln" style="top:483px">48</div>
<div class="cl" style="top:504px"></div>
<div class="ln" style="top:504px">49</div>
<div class="cl" style="top:525px"><span class="d">    @GetMapping(</span><span class="s">&quot;/mascotas/traer&quot;</span><span class="d">)</span></div>
<div class="ln" style="top:525px">50</div>
<div class="cl" style="top:546px"><span class="d">    @ResponseBody</span></div>
<div class="ln" style="top:546px">51</div>
<div class="cl" style="top:567px"><span class="d">    </span><span class="k">public</span><span class="d"> </span><span class="t">List</span><span class="k">&lt;</span><span class="ti">Mascota</span><span class="k">&gt;</span><span class="d"> </span><span class="f">traerMascotas</span><span class="d">(){</span></div>
<div class="ln" style="top:567px">52</div>
<div class="cl" style="top:588px"><span class="d">        </span><span class="k">return</span><span class="d"> ims.</span><span class="i">getMascotas</span><span class="d">();</span></div>
<div class="ln" style="top:588px">53</div>
<div class="cl" style="top:609px"><span class="d">    }</span></div>
<div class="ln" style="top:609px">54</div>
<div class="cl" style="top:630px"></div>
<div class="ln" style="top:630px">55</div>
<div class="cl" style="top:651px"><span class="d">    @GetMapping(</span><span class="s">&quot;/mascotas/traerporraza/{cadena}&quot;</span><span class="d">)</span></div>
<div class="ln" style="top:651px">56</div>
<div class="cl" style="top:672px"><span class="d">    @ResponseBody</span></div>
<div class="ln" style="top:672px">57</div>
<div class="cl" style="top:693px"><span class="d">    </span><span class="k">public</span><span class="d"> </span><span class="t">List</span><span class="k">&lt;</span><span class="ti">Mascota</span><span class="k">&gt;</span><span class="d"> </span><span class="f">traerMascotaPorRaza</span><span class="d">(@PathVariable </span><span class="ti">String</span><span class="d"> </span><span class="p">cadena</span><span class="d">){</span></div>
<div class="ln" style="top:693px">58</div>
<div class="cl" style="top:714px"><span class="d">        </span><span class="k">return</span><span class="d"> ims.</span><span class="i">getMascotasPorRaza</span><span class="d">(cadena);</span></div>
<div class="ln" style="top:714px">59</div>
<div class="cl" style="top:735px"><span class="d">    }</span></div>
<div class="ln" style="top:735px">60</div>
 <div class="abs" style="left:106px;top:737px;width:4px;height:1px;background:#d8d8d0"></div>
</div>
<div class="abs" style="left:399px;top:749px;width:882px;height:1px;background:#2c2d2f"></div>
<svg width="14" height="14" viewBox="0 0 14 14" style="position:absolute;left:406px;top:750px"><path d="M2.2 1.5L10.8 8.4L2.2 15.3" fill="none" stroke="#d4d4d4" stroke-width="2"/></svg>
</body></html>
